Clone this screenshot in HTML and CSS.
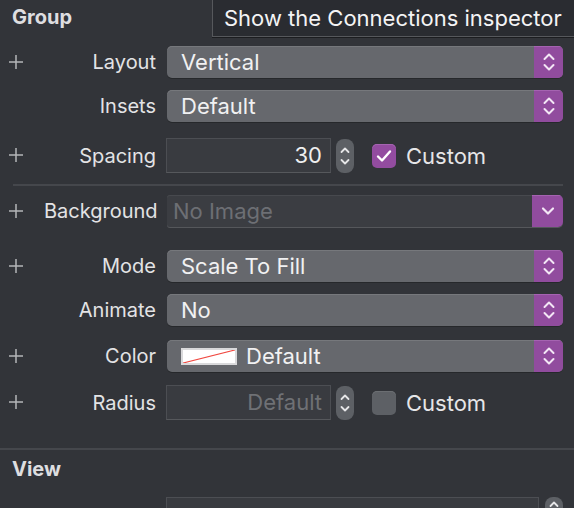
FILE: index.html
```html
<!DOCTYPE html>
<html>
<head>
<meta charset="utf-8">
<link rel="stylesheet" href="styles.css">
</head>
<body>
<div class="panel">
  <div class="section-title group-title">Group</div>

  <div class="row r-layout">
    <span class="plus"><svg width="14" height="14" viewBox="0 0 14 14"><path d="M7 0 V14 M0 7 H14" stroke="#b4b5b8" stroke-width="1.5"/></svg></span><span class="label">Layout</span>
    <div class="popup"><span class="val">Vertical</span><span class="arrows"><svg width="14" height="22" viewBox="0 0 14 22"><path d="M2.5 8 L7 3.5 L11.5 8 M2.5 14 L7 18.5 L11.5 14" fill="none" stroke="#f3e6f5" stroke-width="2" stroke-linecap="round" stroke-linejoin="round"/></svg></span></div>
  </div>

  <div class="row r-insets">
    <span class="plus"></span><span class="label">Insets</span>
    <div class="popup"><span class="val">Default</span><span class="arrows"><svg width="14" height="22" viewBox="0 0 14 22"><path d="M2.5 8 L7 3.5 L11.5 8 M2.5 14 L7 18.5 L11.5 14" fill="none" stroke="#f3e6f5" stroke-width="2" stroke-linecap="round" stroke-linejoin="round"/></svg></span></div>
  </div>

  <div class="row r-spacing tall">
    <span class="plus"><svg width="14" height="14" viewBox="0 0 14 14"><path d="M7 0 V14 M0 7 H14" stroke="#b4b5b8" stroke-width="1.5"/></svg></span><span class="label">Spacing</span>
    <div class="numctl">
      <div class="field num">30</div>
      <div class="stepper"><svg width="12" height="26" viewBox="0 0 12 26"><path d="M2.5 9 L6 5.5 L9.5 9 M2.5 17 L6 20.5 L9.5 17" fill="none" stroke="#e6e6e8" stroke-width="1.8" stroke-linecap="round" stroke-linejoin="round"/></svg></div>
      <div class="check on"><svg width="16" height="14" viewBox="0 0 16 14"><path d="M2 7.5 L6 11.5 L14 2.5" fill="none" stroke="#fff" stroke-width="2.4" stroke-linecap="round" stroke-linejoin="round"/></svg></div>
      <span class="ck-label">Custom</span>
    </div>
  </div>

  <div class="sep inset"></div>

  <div class="row r-bg">
    <span class="plus"><svg width="14" height="14" viewBox="0 0 14 14"><path d="M7 0 V14 M0 7 H14" stroke="#b4b5b8" stroke-width="1.5"/></svg></span><span class="label">Background</span>
    <div class="combo"><span class="placeholder">No Image</span><span class="arrows down"><svg width="16" height="10" viewBox="0 0 16 10"><path d="M3 2.5 L8 7.5 L13 2.5" fill="none" stroke="#f3e6f5" stroke-width="2.2" stroke-linecap="round" stroke-linejoin="round"/></svg></span></div>
  </div>

  <div class="row r-mode">
    <span class="plus"><svg width="14" height="14" viewBox="0 0 14 14"><path d="M7 0 V14 M0 7 H14" stroke="#b4b5b8" stroke-width="1.5"/></svg></span><span class="label">Mode</span>
    <div class="popup"><span class="val">Scale To Fill</span><span class="arrows"><svg width="14" height="22" viewBox="0 0 14 22"><path d="M2.5 8 L7 3.5 L11.5 8 M2.5 14 L7 18.5 L11.5 14" fill="none" stroke="#f3e6f5" stroke-width="2" stroke-linecap="round" stroke-linejoin="round"/></svg></span></div>
  </div>

  <div class="row r-animate">
    <span class="plus"></span><span class="label">Animate</span>
    <div class="popup"><span class="val">No</span><span class="arrows"><svg width="14" height="22" viewBox="0 0 14 22"><path d="M2.5 8 L7 3.5 L11.5 8 M2.5 14 L7 18.5 L11.5 14" fill="none" stroke="#f3e6f5" stroke-width="2" stroke-linecap="round" stroke-linejoin="round"/></svg></span></div>
  </div>

  <div class="row r-color">
    <span class="plus"><svg width="14" height="14" viewBox="0 0 14 14"><path d="M7 0 V14 M0 7 H14" stroke="#b4b5b8" stroke-width="1.5"/></svg></span><span class="label">Color</span>
    <div class="popup"><span class="val color-val"><span class="swatch"><svg width="52" height="13" viewBox="0 0 52 13" preserveAspectRatio="none"><line x1="0" y1="13" x2="52" y2="0" stroke="#f0473f" stroke-width="1.2"/></svg></span>Default</span><span class="arrows"><svg width="14" height="22" viewBox="0 0 14 22"><path d="M2.5 8 L7 3.5 L11.5 8 M2.5 14 L7 18.5 L11.5 14" fill="none" stroke="#f3e6f5" stroke-width="2" stroke-linecap="round" stroke-linejoin="round"/></svg></span></div>
  </div>

  <div class="row r-radius tall">
    <span class="plus"><svg width="14" height="14" viewBox="0 0 14 14"><path d="M7 0 V14 M0 7 H14" stroke="#b4b5b8" stroke-width="1.5"/></svg></span><span class="label">Radius</span>
    <div class="numctl">
      <div class="field num placeholder">Default</div>
      <div class="stepper"><svg width="12" height="26" viewBox="0 0 12 26"><path d="M2.5 9 L6 5.5 L9.5 9 M2.5 17 L6 20.5 L9.5 17" fill="none" stroke="#e6e6e8" stroke-width="1.8" stroke-linecap="round" stroke-linejoin="round"/></svg></div>
      <div class="check off"></div>
      <span class="ck-label">Custom</span>
    </div>
  </div>

  <div class="sep full"></div>

  <div class="section-title view-title">View</div>

  <div class="row r-last">
    <span class="plus"></span><span class="label"></span>
    <div class="lastctl">
      <div class="field wide"></div>
      <div class="stepper small"><svg width="12" height="26" viewBox="0 0 12 26"><path d="M2.5 9 L6 5.5 L9.5 9" fill="none" stroke="#e6e6e8" stroke-width="1.8" stroke-linecap="round" stroke-linejoin="round"/></svg></div>
    </div>
  </div>

  <div class="tooltip">Show the Connections inspector</div>
</div>
</body>
</html>
```

FILE: styles.css
```css
html, body {
  margin: 0;
  padding: 0;
  background: #323439;
  overflow: hidden;
}
body {
  width: 574px;
  height: 508px;
  font-family: Inter, Roboto, "Liberation Sans", sans-serif;
  color: #e3e3e5;
}
.panel {
  position: relative;
  width: 574px;
  height: 508px;
  overflow: hidden;
}
.section-title {
  font-weight: 700;
  font-size: 20px;
  color: #dedee0;
  padding-left: 12px;
  height: 20px;
  line-height: 20px;
}
.group-title { margin-top: 7px; }
.view-title { margin-top: 9px; }

.row {
  display: grid;
  grid-template-columns: 34px 112px 1fr;
  column-gap: 10px;
  align-items: center;
  height: 32px;
  padding-right: 11px;
}
.row.tall { height: 35px; }
.r-layout { margin-top: 19px; }
.r-insets { margin-top: 12px; }
.r-spacing { margin-top: 16px; }
.r-bg { margin-top: 9px; }
.r-mode { margin-top: 23px; }
.r-animate { margin-top: 12px; }
.r-color { margin-top: 14px; }
.r-radius { margin-top: 13px; }
.r-last { margin-top: 18px; }

.plus {
  padding-left: 9px;
  line-height: 0;
  height: 14px;
  margin-top: -1px;
}
.label {
  text-align: right;
  font-size: 20px;
  color: #e3e3e5;
  white-space: nowrap;
}

.popup {
  display: flex;
  align-items: stretch;
  height: 32px;
  background: #66686d;
  border-radius: 5px;
  box-shadow: inset 0 1px 0 #76787c, 0 1px 0 #26282b;
  overflow: hidden;
  margin-left: 1px;
}
.popup .val {
  flex: 1;
  display: flex;
  align-items: center;
  padding-left: 14px;
  font-size: 22px;
  color: #f1f1f2;
}
.arrows {
  width: 29px;
  background: #914c9e;
  display: flex;
  align-items: center;
  justify-content: center;
  box-shadow: inset 0 1px 0 #a563b1;
}
.arrows.down { width: 31px; }

.color-val .swatch {
  display: inline-block;
  width: 52px;
  height: 13px;
  background: #fff;
  border: 2px solid #d9d9db;
  margin-right: 9px;
  line-height: 0;
}

.combo {
  display: flex;
  align-items: stretch;
  height: 32px;
  background: #3b3d42;
  border-radius: 3px 5px 5px 3px;
  box-shadow: inset 0 1px 0 #47494e, 0 1px 0 #55575b;
  overflow: hidden;
  margin-left: 1px;
}
.combo .placeholder {
  flex: 1;
  display: flex;
  align-items: center;
  padding-left: 6px;
  font-size: 22px;
  color: #6d6f74;
}

.numctl, .lastctl {
  display: flex;
  align-items: center;
  height: 35px;
}
.field {
  box-sizing: border-box;
  height: 35px;
  background: #393b40;
  border: 1px solid #4c4e53;
  border-bottom-color: #56585c;
}
.field.num {
  width: 165px;
  text-align: right;
  font-size: 22px;
  line-height: 33px;
  padding-right: 8px;
  color: #eeeeef;
}
.field.num.placeholder { color: #6f7175; }
.stepper {
  width: 18px;
  height: 34px;
  margin-left: 5px;
  border-radius: 8px;
  background: #5d6065;
  display: flex;
  align-items: center;
  justify-content: center;
}
.check {
  width: 24px;
  height: 24px;
  border-radius: 5px;
  margin-left: 18px;
  display: flex;
  align-items: center;
  justify-content: center;
}
.check.on { background: #934ca0; box-shadow: inset 0 1px 0 #a564b1; }
.check.off { background: #5d6065; box-shadow: inset 0 1px 0 #6b6e72; }
.ck-label {
  margin-left: 10px;
  font-size: 22px;
  color: #e6e6e8;
}

.sep { height: 2px; background: #45474c; }
.sep.inset { margin: 11px 11px 0 13px; }
.sep.full { margin-top: 28px; }

.lastctl { align-items: flex-start; }
.field.wide { width: 373px; }
.stepper.small { margin-left: 6px; align-items: flex-start; }

.tooltip {
  position: absolute;
  left: 212px;
  top: -1px;
  width: 380px;
  height: 38px;
  box-sizing: border-box;
  background: #2a2c31;
  border: 1px solid #56585c;
  padding-left: 11px;
  font-size: 22px;
  line-height: 36px;
  color: #f4f4f5;
  white-space: nowrap;
  box-shadow: 0 1px 0 #1c1d20;
}
```
